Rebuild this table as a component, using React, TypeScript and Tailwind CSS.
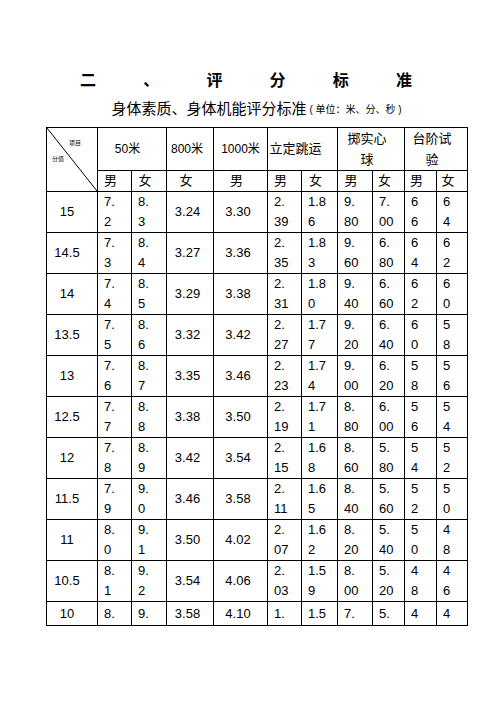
const rows: [string, string[]][] = [
  ["15", ["7.|2", "8.|3", "3.24", "3.30", "2.|39", "1.8|6", "9.|80", "7.|00", "6|6", "6|4"]],
  ["14.5", ["7.|3", "8.|4", "3.27", "3.36", "2.|35", "1.8|3", "9.|60", "6.|80", "6|4", "6|2"]],
  ["14", ["7.|4", "8.|5", "3.29", "3.38", "2.|31", "1.8|0", "9.|40", "6.|60", "6|2", "6|0"]],
  ["13.5", ["7.|5", "8.|6", "3.32", "3.42", "2.|27", "1.7|7", "9.|20", "6.|40", "6|0", "5|8"]],
  ["13", ["7.|6", "8.|7", "3.35", "3.46", "2.|23", "1.7|4", "9.|00", "6.|20", "5|8", "5|6"]],
  ["12.5", ["7.|7", "8.|8", "3.38", "3.50", "2.|19", "1.7|1", "8.|80", "6.|00", "5|6", "5|4"]],
  ["12", ["7.|8", "8.|9", "3.42", "3.54", "2.|15", "1.6|8", "8.|60", "5.|80", "5|4", "5|2"]],
  ["11.5", ["7.|9", "9.|0", "3.46", "3.58", "2.|11", "1.6|5", "8.|40", "5.|60", "5|2", "5|0"]],
  ["11", ["8.|0", "9.|1", "3.50", "4.02", "2.|07", "1.6|2", "8.|20", "5.|40", "5|0", "4|8"]],
  ["10.5", ["8.|1", "9.|2", "3.54", "4.06", "2.|03", "1.5|9", "8.|00", "5.|20", "4|8", "4|6"]],
];

const lastRow = ["8.", "9.", "3.58", "4.10", "1.", "1.5", "7.", "5.", "4", "4"];

const widths = [51, 34, 35, 47, 54, 34, 36, 35, 32, 32, 31];

const td = "border border-black p-0 align-middle";

function Cell({ value }: { value: string }) {
  // 两行的数值单元格靠左，单值居中
  if (value.includes("|")) {
    const [a, b] = value.split("|");
    return (
      <td className={`${td} pl-[6px] text-left leading-[20px]`}>
        <div>{a}</div>
        <div>{b}</div>
      </td>
    );
  }
  return <td className={`${td} pr-[5px] text-center`}>{value}</td>;
}

export default function App() {
  return (
    <div
      className="min-h-[702px] w-[496px] bg-white text-black"
      style={{ fontFamily: '"Liberation Sans", "Noto Sans CJK SC", sans-serif' }}
    >
      <div className="box-content flex w-[332px] justify-between pl-[80px] pt-[71px] text-[16px] font-bold leading-[20px]">
        <span>二</span>
        <span>、</span>
        <span>评</span>
        <span>分</span>
        <span>标</span>
        <span>准</span>
      </div>

      <div className="ml-[46px] mt-[8px] flex w-[421px] items-end justify-center leading-[20px]">
        <span className="text-[15px]">身体素质、身体机能评分标准</span>
        <span className="ml-[3px] text-[10px] leading-[18px]">( 单位：米、分、秒 )</span>
      </div>

      <table className="ml-[46px] mt-[8px] w-[421px] table-fixed border-collapse text-[13px] leading-[20px]">
        <colgroup>
          {widths.map((w, i) => (
            <col key={i} style={{ width: w }} />
          ))}
        </colgroup>
        <thead>
          <tr className="h-[43px]">
            <td rowSpan={2} className={`${td} relative`}>
              <svg className="absolute inset-0 h-full w-full" preserveAspectRatio="none" viewBox="0 0 100 100">
                <line x1="0" y1="0" x2="100" y2="100" stroke="black" strokeWidth="1" vectorEffect="non-scaling-stroke" />
              </svg>
              <span className="absolute left-[22px] top-[11px] text-[6px] leading-[8px]">项目</span>
              <span className="absolute left-[5px] top-[27px] text-[6px] leading-[8px]">分值</span>
            </td>
            <td colSpan={2} className={`${td} pr-[9px] text-center text-[12px]`}>50米</td>
            <td className={`${td} pr-[6px] text-center text-[12px]`}>800米</td>
            <td className={`${td} text-center text-[12px]`}>1000米</td>
            <td colSpan={2} className={`${td} pr-[14px] text-center`}>立定跳运</td>
            <td colSpan={2} className={`${td} pr-[8px] text-center leading-[21px]`}>
              掷实心
              <br />
              球
            </td>
            <td colSpan={2} className={`${td} pr-[8px] text-center leading-[21px]`}>
              台阶试
              <br />
              验
            </td>
          </tr>
          <tr className="h-[21px]">
            {["男", "女", "女", "男", "男", "女", "男", "女", "男", "女"].map((s, i) => (
              <td key={i} className={`${td} pr-[8px] text-center`}>
                {s}
              </td>
            ))}
          </tr>
        </thead>
        <tbody>
          {rows.map(([score, vals]) => (
            <tr key={score} className="h-[41px]">
              <td className={`${td} pr-[10px] text-center`}>{score}</td>
              {vals.map((v, i) => (
                <Cell key={i} value={v} />
              ))}
            </tr>
          ))}
          <tr className="h-[24px]">
            <td className={`${td} pr-[10px] text-center`}>10</td>
            {lastRow.map((v, i) =>
              i === 2 || i === 3 ? (
                <td key={i} className={`${td} pr-[5px] text-center`}>
                  {v}
                </td>
              ) : (
                <td key={i} className={`${td} pl-[6px] text-left`}>
                  {v}
                </td>
              )
            )}
          </tr>
        </tbody>
      </table>
    </div>
  );
}
